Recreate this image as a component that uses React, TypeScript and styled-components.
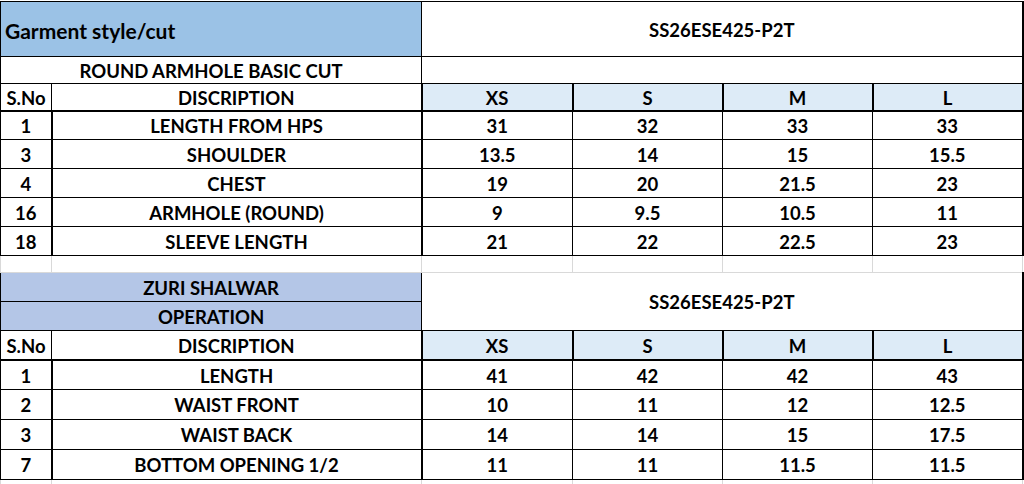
import styled, { createGlobalStyle } from "styled-components";

const GlobalStyle = createGlobalStyle`
  body {
    margin: 0;
    background: #ffffff;
  }
`;

const Page = styled.div`
  padding-top: 1px;
  width: 1024px;
  height: 484px;
  overflow: hidden;
  font-family: Lato, "Liberation Sans", sans-serif;
  font-weight: 700;
  color: #000;
`;

const Sheet = styled.table`
  border-collapse: collapse;
  table-layout: fixed;
  width: 1022px;
  font-size: 18.5px;
`;

const Row = styled.tr<{ $h: number }>`
  height: ${(p) => p.$h}px;
`;

const Cell = styled.td<{
  $bg?: string;
  $left?: boolean;
  $size?: number;
  $thickBottom?: boolean;
  $thickLeft?: boolean;
  $thickRight?: boolean;
  $grid?: boolean;
}>`
  padding: 2px 4px 0;
  text-align: ${(p) => (p.$left ? "left" : "center")};
  vertical-align: middle;
  ${(p) => p.$size && `font-size: ${p.$size}px;`}
  background: ${(p) => p.$bg || "#ffffff"};
  border: 1px solid ${(p) => (p.$grid ? "#d9d9d9" : "#000")};
  ${(p) => p.$thickBottom && "border-bottom: 2px solid #000;"}
  ${(p) => p.$thickLeft && "border-left: 2px solid #000;"}
  ${(p) => p.$thickRight && "border-right: 2px solid #000;"}
  white-space: nowrap;
  overflow: hidden;
  line-height: 1;
`;

const BLUE = "#9bc2e6";
const PERI = "#b4c6e7";
const PALE = "#ddebf7";
const STYLE_NO = "SS26ESE425-P2T";
const SIZES = ["XS", "S", "M", "L"];

const topRows: (string | number)[][] = [
  [1, "LENGTH FROM HPS", 31, 32, 33, 33],
  [3, "SHOULDER", 13.5, 14, 15, 15.5],
  [4, "CHEST", 19, 20, 21.5, 23],
  [16, "ARMHOLE (ROUND)", 9, 9.5, 10.5, 11],
  [18, "SLEEVE LENGTH", 21, 22, 22.5, 23],
];

const bottomRows: (string | number)[][] = [
  [1, "LENGTH", 41, 42, 42, 43],
  [2, "WAIST FRONT", 10, 11, 12, 12.5],
  [3, "WAIST BACK", 14, 14, 15, 17.5],
  [7, "BOTTOM OPENING 1/2", 11, 11, 11.5, 11.5],
];

const HeaderRow = ({ h }: { h: number }) => (
  <Row $h={h}>
    <Cell $thickBottom>S.No</Cell>
    <Cell $thickBottom>DISCRIPTION</Cell>
    {SIZES.map((s, i) => (
      <Cell
        key={s}
        $bg={PALE}
        $thickBottom
        $thickLeft
        $thickRight={i === SIZES.length - 1}
      >
        {s}
      </Cell>
    ))}
  </Row>
);

const DataRow = ({ row, h }: { row: (string | number)[]; h: number }) => (
  <Row $h={h}>
    {row.map((v, i) => (
      <Cell
        key={i}
        $thickLeft={i === 1 || i === 2}
        $thickRight={i === row.length - 1}
      >
        {v}
      </Cell>
    ))}
  </Row>
);

const GridRow = ({ h }: { h: number }) => (
  <Row $h={h}>
    {[0, 1, 2, 3, 4, 5].map((i) => (
      <Cell key={i} $grid />
    ))}
  </Row>
);

export default function App() {
  return (
    <Page>
      <GlobalStyle />
      <Sheet>
        <colgroup>
          <col style={{ width: 51 }} />
          <col style={{ width: 370 }} />
          <col style={{ width: 151 }} />
          <col style={{ width: 150 }} />
          <col style={{ width: 150 }} />
          <col style={{ width: 150 }} />
        </colgroup>
        <tbody>
          <Row $h={55}>
            <Cell colSpan={2} $bg={BLUE} $left $size={21}>
              Garment style/cut
            </Cell>
            <Cell colSpan={4} $thickRight>
              {STYLE_NO}
            </Cell>
          </Row>
          <Row $h={27}>
            <Cell colSpan={2}>ROUND ARMHOLE BASIC CUT</Cell>
            <Cell colSpan={4} $thickRight />
          </Row>
          <HeaderRow h={27} />
          {topRows.map((r, i) => (
            <DataRow key={i} row={r} h={29} />
          ))}
          <GridRow h={17} />
          <Row $h={29}>
            <Cell colSpan={2} $bg={PERI}>
              ZURI SHALWAR
            </Cell>
            <Cell colSpan={4} rowSpan={2} $thickRight>
              {STYLE_NO}
            </Cell>
          </Row>
          <Row $h={29}>
            <Cell colSpan={2} $bg={PERI}>
              OPERATION
            </Cell>
          </Row>
          <HeaderRow h={29} />
          {bottomRows.map((r, i) => (
            <DataRow key={i} row={r} h={30} />
          ))}
          <GridRow h={20} />
        </tbody>
      </Sheet>
    </Page>
  );
}
